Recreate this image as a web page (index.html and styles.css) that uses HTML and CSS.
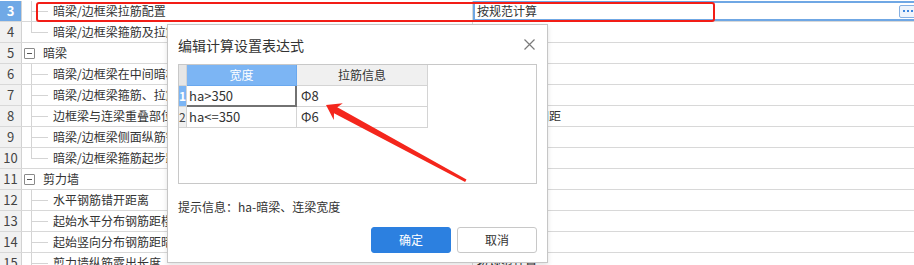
FILE: index.html
```html
<!DOCTYPE html>
<html lang="zh-CN">
<head>
<meta charset="utf-8">
<title>编辑计算设置表达式</title>
<link rel="stylesheet" href="styles.css">
</head>
<body>
<div class="page">
  <div class="sheet">
    <div class="row current">
      <div class="num">3</div>
      <div class="name leaf mid">暗梁/边框梁拉筋配置</div>
      <div class="val"><span class="val-text">按规范计算</span><span class="more"><i></i><i></i><i></i></span></div>
    </div>
    <div class="row">
      <div class="num">4</div>
      <div class="name leaf last">暗梁/边框梁箍筋及拉筋弯钩角度</div>
      <div class="val">135°</div>
    </div>
    <div class="row">
      <div class="num">5</div>
      <div class="name group"><span class="toggle"></span>暗梁</div>
      <div class="val"></div>
    </div>
    <div class="row">
      <div class="num">6</div>
      <div class="name leaf mid">暗梁/边框梁在中间暗柱处是否贯通</div>
      <div class="val">是</div>
    </div>
    <div class="row">
      <div class="num">7</div>
      <div class="name leaf mid">暗梁/边框梁箍筋、拉筋加密</div>
      <div class="val">否</div>
    </div>
    <div class="row">
      <div class="num">8</div>
      <div class="name leaf mid">边框梁与连梁重叠部位箍筋设置</div>
      <div class="val">按连梁箍筋间距</div>
    </div>
    <div class="row">
      <div class="num">9</div>
      <div class="name leaf mid">暗梁/边框梁侧面纵筋锚固</div>
      <div class="val">按规范计算</div>
    </div>
    <div class="row">
      <div class="num">10</div>
      <div class="name leaf last">暗梁/边框梁箍筋起步距离</div>
      <div class="val">50</div>
    </div>
    <div class="row">
      <div class="num">11</div>
      <div class="name group"><span class="toggle"></span>剪力墙</div>
      <div class="val"></div>
    </div>
    <div class="row">
      <div class="num">12</div>
      <div class="name leaf mid">水平钢筋错开距离</div>
      <div class="val">500</div>
    </div>
    <div class="row">
      <div class="num">13</div>
      <div class="name leaf mid">起始水平分布钢筋距楼面距离</div>
      <div class="val">50</div>
    </div>
    <div class="row">
      <div class="num">14</div>
      <div class="name leaf mid">起始竖向分布钢筋距暗柱边距离</div>
      <div class="val">50</div>
    </div>
    <div class="row">
      <div class="num">15</div>
      <div class="name leaf mid">剪力墙纵筋露出长度</div>
      <div class="val">按规范计算</div>
    </div>
  </div>

  <div class="mark-box"></div>

  <div class="dialog">
    <div class="dlg-head">
      <span class="dlg-title">编辑计算设置表达式</span>
      <svg class="close" width="11" height="11" viewBox="0 0 11 11"><path d="M0.5 0.5L10.5 10.5M10.5 0.5L0.5 10.5" stroke="#7a7a7a" stroke-width="1.2" fill="none"/></svg>
    </div>
    <div class="dlg-grid">
      <div class="g-row g-head">
        <div class="g-num"></div>
        <div class="g-c1 g-sel">宽度</div>
        <div class="g-c2">拉筋信息</div>
      </div>
      <div class="g-row">
        <div class="g-num g-on">1</div>
        <div class="g-c1 g-cur">ha&gt;350</div>
        <div class="g-c2">Φ8</div>
      </div>
      <div class="g-row">
        <div class="g-num">2</div>
        <div class="g-c1">ha&lt;=350</div>
        <div class="g-c2">Φ6</div>
      </div>
    </div>
    <div class="hint">提示信息：ha-暗梁、连梁宽度</div>
    <div class="btns">
      <button class="btn ok">确定</button>
      <button class="btn cancel">取消</button>
    </div>
  </div>

  <svg class="arrow" width="914" height="265" viewBox="0 0 914 265">
    <polygon points="326,105 342.8,103.3 337.3,107.2 466.5,179.5 465.1,182.1 334,113.3 333.8,120" fill="#f4261c"/>
  </svg>
</div>
</body>
</html>
```

FILE: styles.css
```css
html, body {
  margin: 0;
  padding: 0;
  background: #fff;
  overflow: hidden;
}

.page {
  position: relative;
  width: 914px;
  height: 265px;
  overflow: hidden;
  font-family: "Noto Sans CJK SC", "Noto Sans", sans-serif;
  font-size: 12px;
  color: #333;
}

.sheet {
  padding-top: 1px;
}

.row {
  display: flex;
  height: 21px;
  box-sizing: border-box;
  border-bottom: 1px solid #d8d8d8;
  line-height: 20px;
}

.num {
  flex: none;
  width: 22px;
  box-sizing: border-box;
  border-right: 1px solid #d2d2d2;
  background: #f1f1f1;
  text-align: center;
  font-size: 13px;
  color: #444;
}

.current .num {
  background: #70a9e6;
  color: #fff;
  font-weight: bold;
}

.name {
  flex: none;
  width: 451px;
  box-sizing: border-box;
  border-right: 1px solid #d8d8d8;
  position: relative;
  white-space: nowrap;
  overflow: hidden;
}

.leaf {
  padding-left: 31px;
}

.leaf::before {
  content: "";
  position: absolute;
  left: 9px;
  top: -1px;
  bottom: -1px;
  border-left: 1px solid #d4d4d4;
}

.leaf.last::before {
  bottom: auto;
  height: 11px;
}

.leaf::after {
  content: "";
  position: absolute;
  left: 9px;
  top: 10px;
  width: 17px;
  border-top: 1px solid #d4d4d4;
}

.group {
  display: flex;
  align-items: center;
  padding-left: 2px;
}

.toggle {
  position: relative;
  flex: none;
  width: 11px;
  height: 11px;
  box-sizing: border-box;
  border: 1px solid #8a8a8a;
  border-radius: 1px;
  margin-right: 8px;
}

.toggle::after {
  content: "";
  position: absolute;
  left: 2px;
  right: 2px;
  top: 4px;
  border-top: 1px solid #555;
}

.val {
  flex: 1;
  display: flex;
  align-items: center;
  padding-left: 4px;
  white-space: nowrap;
  min-width: 0;
}

.current .val {
  box-shadow: inset 0 2px 0 #6fa7e4, inset 0 -2px 0 #6fa7e4, inset 2px 0 0 #6fa7e4;
}

.more {
  margin-left: auto;
  margin-right: -5px;
  flex: none;
  display: flex;
  align-items: center;
  justify-content: flex-start;
  gap: 2px;
  width: 20px;
  height: 13px;
  box-sizing: border-box;
  padding-left: 3px;
  border: 1px solid #86b0e2;
  border-radius: 2px;
  background: #eef4fc;
}

.more i {
  display: block;
  width: 2px;
  height: 2px;
  background: #3c86de;
}

.mark-box {
  position: absolute;
  left: 36px;
  top: 2px;
  width: 679px;
  height: 20px;
  box-sizing: border-box;
  border: 2px solid #f21d16;
  border-radius: 3px;
}

.dialog {
  position: absolute;
  left: 167px;
  top: 24px;
  width: 381px;
  height: 239px;
  box-sizing: border-box;
  border: 1px solid #c6c6c6;
  background: #fff;
  box-shadow: 0 2px 5px rgba(0, 0, 0, 0.12);
  padding: 0 10px;
  display: flex;
  flex-direction: column;
}

.dlg-head {
  height: 39px;
  display: flex;
  align-items: center;
  justify-content: space-between;
}

.dlg-title {
  font-size: 14px;
  color: #333;
  line-height: 18px;
}

.close {
  margin-right: 2px;
  margin-top: -1px;
}

.dlg-grid {
  height: 120px;
  box-sizing: border-box;
  border: 1px solid #c8c8c8;
}

.g-row {
  display: flex;
  height: 21px;
  line-height: 20px;
}

.g-row > div {
  box-sizing: border-box;
  border-right: 1px solid #d4d4d4;
  border-bottom: 1px solid #d4d4d4;
  white-space: nowrap;
  overflow: hidden;
}

.g-num {
  width: 8px;
  background: #f0f0f0;
  font-size: 12px;
  text-align: left;
  padding-left: 0;
  color: #444;
}

.g-head .g-num {
  background: #e6e6e6;
}

.g-num.g-on {
  background: #7cb5f4;
  color: #fff;
  font-weight: bold;
}

.g-c1 {
  width: 110px;
  padding-left: 2px;
  font-size: 13px;
}

.g-c2 {
  width: 131px;
  padding-left: 4px;
  font-size: 13px;
}

.g-head > div {
  font-size: 12px;
  text-align: center;
  padding-left: 0;
  background: #f0f0f0;
}

.g-head .g-sel {
  background: #7cb5f4;
  color: #fff;
  border-right-color: #6aa8ee;
  border-bottom-color: #6aa8ee;
}

.g-row .g-cur {
  border-right: 2px solid #727272;
  border-bottom: 2px solid #727272;
}

.hint {
  margin-top: 15px;
  line-height: 16px;
  font-size: 12px;
  color: #333;
}

.btns {
  margin-top: 12px;
  display: flex;
  justify-content: flex-end;
  gap: 6px;
}

.btn {
  width: 80px;
  height: 26px;
  box-sizing: border-box;
  border-radius: 3px;
  font-family: "Noto Sans CJK SC", sans-serif;
  font-size: 12px;
  padding: 0;
  line-height: 24px;
}

.ok {
  background: #2c80e0;
  border: 1px solid #2c80e0;
  color: #fff;
}

.cancel {
  background: #fff;
  border: 1px solid #c8c8c8;
  color: #333;
}

.arrow {
  position: absolute;
  left: 0;
  top: 0;
  pointer-events: none;
}
```
